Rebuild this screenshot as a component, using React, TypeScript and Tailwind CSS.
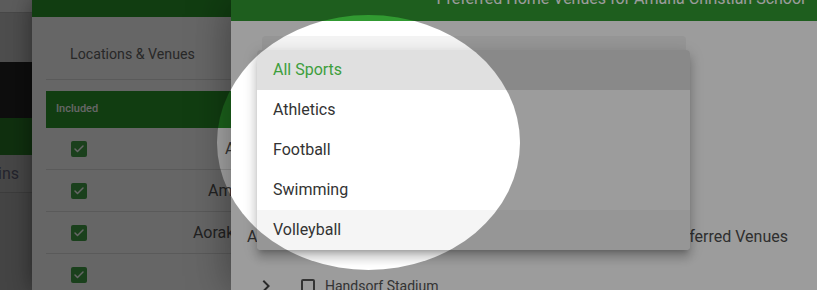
import { Check } from 'lucide-react';

const sports = ['All Sports', 'Athletics', 'Football', 'Swimming', 'Volleyball'];

// rows in the venue table sit behind the second dialog, only their start shows
const venues = [
	{ name: 'Albany Stadium', offset: 'ml-[138px]' },
	{ name: 'Amana Christian School', offset: 'ml-[121px]' },
	{ name: 'Aoraki Park', offset: 'ml-[106px]' },
	{ name: 'Arena Manawatu', offset: 'ml-[160px]' },
];

const PageBehind = () => (
	<div className="flex h-full">
		<div className="flex w-[32px] flex-col">
			<div className="h-[13px] border-b border-[#b3b3b3] bg-[#e6e6e6]" />
			<div className="h-[49px] bg-[#c0c0c0]" />
			<div className="h-[56px] bg-[#232323]" />
			<div className="h-[37px] bg-[#287826]" />
			<div className="flex h-[38px] items-center justify-end overflow-hidden border-b border-[#969696] bg-[#b0b0b0] pr-[13px] text-[16px] whitespace-nowrap text-[#5a5a70]">
				Admins
			</div>
			<div className="flex-1 bg-[#aaaaaa]" />
		</div>
		<div className="flex-1 bg-[#dddddd]" />
	</div>
);

const LocationsDialog = () => (
	<div className="absolute inset-y-0 left-[32px] w-[420px] bg-white shadow-[0_0_22px_rgba(0,0,0,0.45)]">
		<div className="h-[17px] bg-[#2b992b]" />
		<div className="px-[14px]">
			<div className="flex h-[63px] items-center border-b border-[#e1e1e1] pt-[13px] pl-[24px] text-[14.2px] text-[#666666]">
				Locations &amp; Venues
			</div>
			<div className="mt-[11px] flex h-[37px] items-center bg-[#2b992b] px-[10px] text-[11px] font-medium text-white">
				Included
			</div>
			{venues.map((venue) => (
				<div
					key={venue.name}
					className="flex h-[42px] items-center border-b border-[#e1e1e1] pl-[25px] text-[16px] whitespace-nowrap text-[#555555]"
				>
					<span className="flex h-[16px] w-[16px] items-center justify-center rounded-[2px] bg-[#43a047]">
						<Check className="h-[12px] w-[12px] text-white" strokeWidth={3} />
					</span>
					<span className={venue.offset}>{venue.name}</span>
				</div>
			))}
		</div>
	</div>
);

const PreferredDialog = () => (
	<div className="absolute inset-y-0 left-[231px] right-0 flex flex-col bg-white shadow-[0_0_40px_rgba(0,0,0,0.4)]">
		<div className="h-[21px] shrink-0 bg-[#319a31] pr-[12px] text-right">
			<p className="-mt-[11px] text-[16px] leading-[20px] whitespace-nowrap text-white">
				Preferred Home Venues for Amana Christian School
			</p>
		</div>
		<div className="px-[16px]">
			<div className="mt-[15px] ml-[15px] h-[56px] w-[424px] rounded-t-[4px] bg-[#f3f3f3]" />
			<div className="mt-[133px] flex justify-between pr-[13px] text-[16px] leading-[24px] text-[#4d4d4d]">
				<span>Available Venues</span>
				<span>Preferred Venues</span>
			</div>
			<div className="mt-[25px] flex h-[24px] items-center text-[14px] text-[#545454]">
				<svg viewBox="0 0 24 24" className="ml-[7px] h-[24px] w-[24px] fill-[#444444]">
					<path d="M8.59 16.59 13.17 12 8.59 7.41 10 6l6 6-6 6-1.41-1.41z" />
				</svg>
				<span className="ml-[23px] h-[14px] w-[14px] rounded-[2px] border-2 border-[#555555]" />
				<span className="ml-[10px]">Handsorf Stadium</span>
			</div>
		</div>
	</div>
);

const SportMenu = () => (
	<div className="absolute top-[50px] left-[257px] w-[433px] overflow-hidden rounded-[4px] bg-white shadow-[0_5px_5px_-3px_rgba(0,0,0,0.2),0_8px_10px_1px_rgba(0,0,0,0.14),0_3px_14px_2px_rgba(0,0,0,0.12)]">
		{sports.map((sport, i) => (
			<div
				key={sport}
				className={`flex h-[40px] items-center px-[16px] text-[16px] ${
					i === 0
						? 'bg-[#e0e0e0] text-[#3d9e3d]'
						: i === sports.length - 1
							? 'bg-[#f5f5f5] text-[#333333]'
							: 'text-[#333333]'
				}`}
			>
				{sport}
			</div>
		))}
	</div>
);

export default function App() {
	return (
		<div className="relative h-[290px] w-[817px] overflow-hidden font-[Roboto,sans-serif]">
			<PageBehind />
			<LocationsDialog />
			<div className="absolute inset-0 bg-black/[0.344]" />
			<PreferredDialog />
			<SportMenu />
			{/* spotlight: everything outside the ellipse is dimmed */}
			<div className="pointer-events-none absolute top-[15px] left-[217px] h-[255px] w-[303px] rounded-[50%] shadow-[0_0_0_1200px_rgba(0,0,0,0.39)]" />
		</div>
	);
}
